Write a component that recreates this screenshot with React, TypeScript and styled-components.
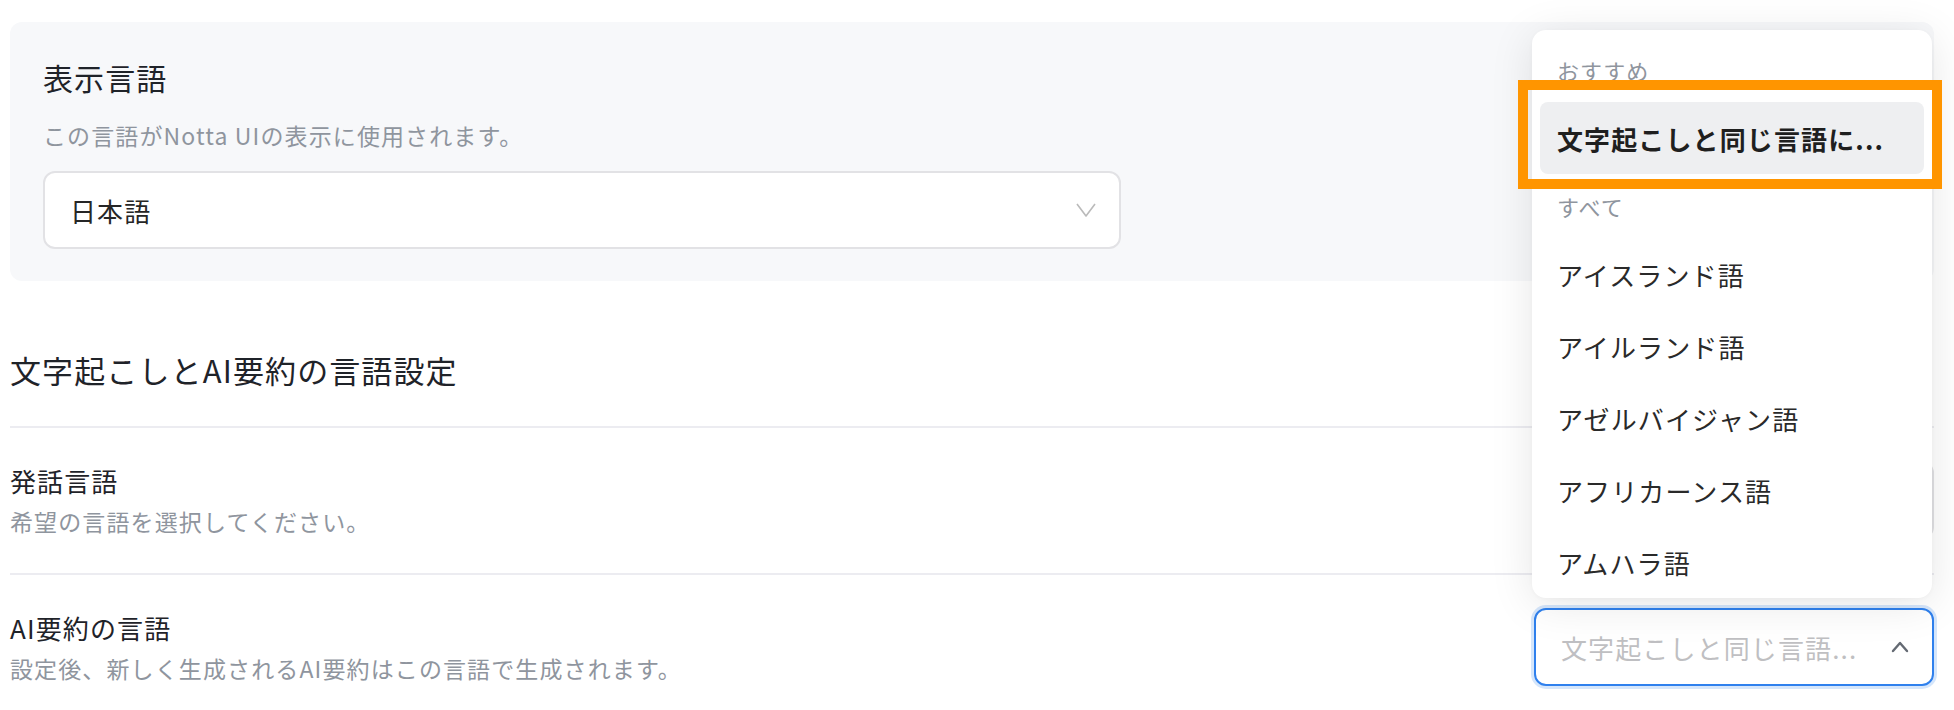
import React from "react";
import styled, { createGlobalStyle, css } from "styled-components";

const GlobalStyle = createGlobalStyle`
  html, body {
    margin: 0;
    padding: 0;
    background: #ffffff;
  }
  body {
    font-family: "Noto Sans CJK JP", "Noto Sans", "Liberation Sans", sans-serif;
    letter-spacing: 0.07em;
    color: #1f2329;
  }
`;

const Page = styled.div`
  padding: 22px 20px 0 10px;
  width: 1924px;
`;

const DisplayPanel = styled.section`
  background: #f7f8fa;
  border-radius: 12px;
  padding: 32px 33px 32px 33px;
`;

const PanelTitle = styled.h2`
  margin: 0;
  font-size: 30px;
  line-height: 46px;
  font-weight: 400;
  color: #1f2329;
`;

const Description = styled.p<{ $gap?: number }>`
  margin: ${(p) => p.$gap ?? 4}px 0 0;
  font-size: 23px;
  line-height: 34px;
  color: #8f959e;
`;

const SectionTitle = styled.h3`
  margin: 66px 0 33px;
  font-size: 31px;
  line-height: 46px;
  font-weight: 400;
  color: #1f2329;
`;

const SettingRow = styled.div`
  display: flex;
  align-items: center;
  justify-content: space-between;
  border-top: 2px solid #ececf1;
  padding: 33px 0 34px;
`;

const RowText = styled.div`
  display: flex;
  flex-direction: column;
`;

const Label = styled.div`
  font-size: 26px;
  line-height: 38px;
  color: #1f2329;
`;

const SelectWrap = styled.div`
  position: relative;
  width: 400px;
`;

const SelectBox = styled.div<{ $width?: number; $focused?: boolean }>`
  box-sizing: border-box;
  width: ${(p) => (p.$width ? `${p.$width}px` : "100%")};
  height: 78px;
  margin-top: ${(p) => (p.$width ? "19px" : "0")};
  display: flex;
  align-items: center;
  justify-content: space-between;
  padding: 0 23px 0 25px;
  background: #ffffff;
  border: 2px solid #e2e2e5;
  border-radius: 12px;
  ${(p) =>
    p.$focused &&
    css`
      border-color: #2f80ed;
      box-shadow: 0 0 0 3px rgba(47, 128, 237, 0.2);
    `}
`;

const SelectValue = styled.span<{ $placeholder?: boolean }>`
  font-size: 26px;
  color: ${(p) => (p.$placeholder ? "#bfbfc2" : "#262626")};
  white-space: nowrap;
  overflow: hidden;
  text-overflow: ellipsis;
`;

const Menu = styled.div`
  position: absolute;
  left: -2px;
  bottom: calc(100% + 10px);
  width: 400px;
  box-sizing: border-box;
  padding: 8px 8px 0;
  background: #ffffff;
  border-radius: 14px;
  box-shadow: 0 6px 44px rgba(0, 0, 0, 0.1), 0 1px 4px rgba(0, 0, 0, 0.03);
  z-index: 5;
`;

const GroupLabel = styled.div`
  height: 64px;
  display: flex;
  align-items: center;
  padding-left: 17px;
  font-size: 22px;
  color: #8f959e;
`;

const MenuItem = styled.div<{ $active?: boolean }>`
  height: 72px;
  display: flex;
  align-items: center;
  padding: 0 17px;
  border-radius: 8px;
  font-size: 26px;
  color: #2a2a2a;
  white-space: nowrap;
  overflow: hidden;
  ${(p) =>
    p.$active &&
    css`
      background: #eeeff1;
      font-weight: 700;
      color: #1f1f1f;
    `}
`;

const Highlight = styled.div`
  position: absolute;
  left: -14px;
  top: 50px;
  width: 424px;
  height: 109px;
  box-sizing: border-box;
  border: 10px solid #ff9500;
  pointer-events: none;
`;

function ChevronDown() {
  return (
    <svg width="20" height="14" viewBox="0 0 20 14" fill="none">
      <polyline
        points="1,1 10,13 19,1"
        stroke="#bababa"
        strokeWidth="1.6"
        strokeLinejoin="round"
      />
    </svg>
  );
}

function ChevronUp() {
  return (
    <svg width="18" height="12" viewBox="0 0 18 12" fill="none">
      <polyline
        points="2,10 9,2 16,10"
        stroke="#646a73"
        strokeWidth="2.4"
        strokeLinecap="round"
        strokeLinejoin="round"
      />
    </svg>
  );
}

const languages = [
  "アイスランド語",
  "アイルランド語",
  "アゼルバイジャン語",
  "アフリカーンス語",
  "アムハラ語",
];

export default function App() {
  return (
    <>
      <GlobalStyle />
      <Page>
        <DisplayPanel>
          <PanelTitle>表示言語</PanelTitle>
          <Description $gap={18}>
            この言語がNotta UIの表示に使用されます。
          </Description>
          <SelectBox $width={1078}>
            <SelectValue>日本語</SelectValue>
            <ChevronDown />
          </SelectBox>
        </DisplayPanel>

        <SectionTitle>文字起こしとAI要約の言語設定</SectionTitle>

        <SettingRow>
          <RowText>
            <Label>発話言語</Label>
            <Description>希望の言語を選択してください。</Description>
          </RowText>
          <SelectWrap>
            <SelectBox>
              <SelectValue>日本語</SelectValue>
              <ChevronDown />
            </SelectBox>
          </SelectWrap>
        </SettingRow>

        <SettingRow>
          <RowText>
            <Label>AI要約の言語</Label>
            <Description>
              設定後、新しく生成されるAI要約はこの言語で生成されます。
            </Description>
          </RowText>
          <SelectWrap>
            <Menu>
              <GroupLabel>おすすめ</GroupLabel>
              <MenuItem $active>文字起こしと同じ言語に...</MenuItem>
              <GroupLabel>すべて</GroupLabel>
              {languages.map((lang) => (
                <MenuItem key={lang}>{lang}</MenuItem>
              ))}
              <Highlight />
            </Menu>
            <SelectBox $focused>
              <SelectValue $placeholder>文字起こしと同じ言語...</SelectValue>
              <ChevronUp />
            </SelectBox>
          </SelectWrap>
        </SettingRow>
      </Page>
    </>
  );
}
